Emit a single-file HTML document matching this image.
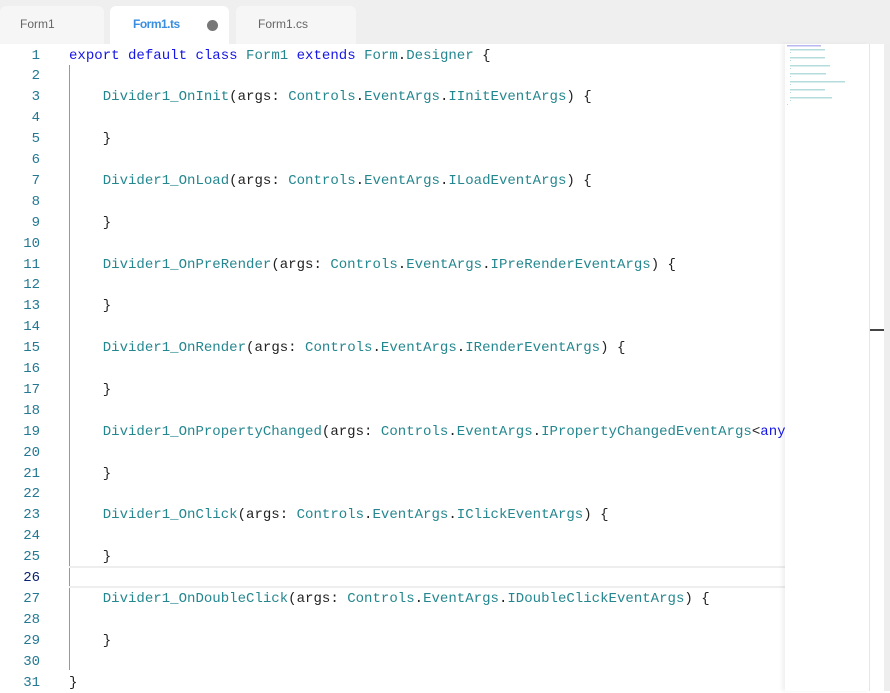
<!DOCTYPE html>
<html><head><meta charset="utf-8"><style>
body{margin:0;width:890px;height:691px;overflow:hidden;background:#fff;position:relative;font-family:"Liberation Sans",sans-serif}
.bar{position:absolute;left:0;top:0;width:890px;height:44px;background:#efefef}
.tab{position:absolute;top:6px;height:38px;background:#f6f6f6;border-radius:6px 6px 0 0;font-size:12px;color:#666;line-height:36px}
.tab.act{background:#fff;color:#3a8ee0;font-weight:bold;letter-spacing:-0.5px}
.w{position:absolute;left:0;top:1.5px;width:890px;height:691px}
.ln{position:absolute;left:0;width:40px;text-align:right;font-family:"Liberation Mono",monospace;font-size:14px;color:#237893;height:20.9px;line-height:20.9px}
.cd{position:absolute;left:69px;white-space:pre;font-family:"Liberation Mono",monospace;font-size:14.05px;color:#222;height:20.9px;line-height:20.9px}
.k{color:#1515e6}.t{color:#24878f}
</style></head><body>
<div class="bar"></div>
<div class="tab" style="left:0;width:104px"><span style="margin-left:20px">Form1</span></div>
<div class="tab act" style="left:110px;width:119px"><span style="margin-left:23px">Form1.ts</span><span style="position:absolute;left:97px;top:14px;width:11px;height:11px;border-radius:50%;background:#777"></span></div>
<div class="tab" style="left:236px;width:120px"><span style="margin-left:22px">Form1.cs</span></div>
<div style="position:absolute;left:69px;top:65px;width:1px;height:605px;background:#999"></div>
<div style="position:absolute;left:69px;top:566px;width:716px;height:18px;border-top:2px solid #eee;border-bottom:2px solid #eee"></div>
<div class="w">
<div class="ln" style="top:44px">1</div><div class="cd" style="top:44px"><span class="k">export default class</span> <span class="t">Form1</span> <span class="k">extends</span> <span class="t">Form</span>.<span class="t">Designer</span> {</div>
<div class="ln" style="top:64.9px">2</div>
<div class="ln" style="top:85.8px">3</div><div class="cd" style="top:85.8px">    <span class="t">Divider1_OnInit</span>(args: <span class="t">Controls</span>.<span class="t">EventArgs</span>.<span class="t">IInitEventArgs</span>) {</div>
<div class="ln" style="top:106.7px">4</div>
<div class="ln" style="top:127.6px">5</div><div class="cd" style="top:127.6px">    }</div>
<div class="ln" style="top:148.5px">6</div>
<div class="ln" style="top:169.4px">7</div><div class="cd" style="top:169.4px">    <span class="t">Divider1_OnLoad</span>(args: <span class="t">Controls</span>.<span class="t">EventArgs</span>.<span class="t">ILoadEventArgs</span>) {</div>
<div class="ln" style="top:190.3px">8</div>
<div class="ln" style="top:211.2px">9</div><div class="cd" style="top:211.2px">    }</div>
<div class="ln" style="top:232.1px">10</div>
<div class="ln" style="top:253px">11</div><div class="cd" style="top:253px">    <span class="t">Divider1_OnPreRender</span>(args: <span class="t">Controls</span>.<span class="t">EventArgs</span>.<span class="t">IPreRenderEventArgs</span>) {</div>
<div class="ln" style="top:273.9px">12</div>
<div class="ln" style="top:294.8px">13</div><div class="cd" style="top:294.8px">    }</div>
<div class="ln" style="top:315.7px">14</div>
<div class="ln" style="top:336.6px">15</div><div class="cd" style="top:336.6px">    <span class="t">Divider1_OnRender</span>(args: <span class="t">Controls</span>.<span class="t">EventArgs</span>.<span class="t">IRenderEventArgs</span>) {</div>
<div class="ln" style="top:357.5px">16</div>
<div class="ln" style="top:378.4px">17</div><div class="cd" style="top:378.4px">    }</div>
<div class="ln" style="top:399.3px">18</div>
<div class="ln" style="top:420.2px">19</div><div class="cd" style="top:420.2px;width:716px;overflow:hidden">    <span class="t">Divider1_OnPropertyChanged</span>(args: <span class="t">Controls</span>.<span class="t">EventArgs</span>.<span class="t">IPropertyChangedEventArgs</span>&lt;<span class="k">any</span>&gt;) {</div>
<div class="ln" style="top:441.1px">20</div>
<div class="ln" style="top:462px">21</div><div class="cd" style="top:462px">    }</div>
<div class="ln" style="top:482.9px">22</div>
<div class="ln" style="top:503.8px">23</div><div class="cd" style="top:503.8px">    <span class="t">Divider1_OnClick</span>(args: <span class="t">Controls</span>.<span class="t">EventArgs</span>.<span class="t">IClickEventArgs</span>) {</div>
<div class="ln" style="top:524.7px">24</div>
<div class="ln" style="top:545.6px">25</div><div class="cd" style="top:545.6px">    }</div>
<div class="ln" style="top:566.5px;color:#0b216f">26</div>
<div class="ln" style="top:587.4px">27</div><div class="cd" style="top:587.4px">    <span class="t">Divider1_OnDoubleClick</span>(args: <span class="t">Controls</span>.<span class="t">EventArgs</span>.<span class="t">IDoubleClickEventArgs</span>) {</div>
<div class="ln" style="top:608.3px">28</div>
<div class="ln" style="top:629.2px">29</div><div class="cd" style="top:629.2px">    }</div>
<div class="ln" style="top:650.1px">30</div>
<div class="ln" style="top:671px">31</div><div class="cd" style="top:671px">}</div>
</div>
<div style="position:absolute;left:785px;top:44px;width:84px;height:647px;background:#fff;box-shadow:-3px 0 4px rgba(0,0,0,0.06);border-right:1px solid #e6e6e6"></div>
<div style="position:absolute;left:870px;top:44px;width:14px;height:647px;background:#fff"></div>
<div style="position:absolute;left:884px;top:44px;width:6px;height:647px;background:#eee"></div>
<div style="position:absolute;left:870px;top:329px;width:14px;height:2px;background:#444"></div>
<svg style="position:absolute;left:786px;top:44px" width="82" height="70">
<g fill="#b5dcdc"><rect x="1" y="1" width="34" height="1.5" fill="#b8b8f0"/>
<rect x="4" y="5" width="35" height="1.5"/><rect x="4" y="13" width="35" height="1.5"/><rect x="4" y="21" width="40" height="1.5"/><rect x="4" y="29" width="36" height="1.5"/><rect x="4" y="37" width="55" height="1.5"/><rect x="4" y="45" width="35" height="1.5"/><rect x="4" y="53" width="42" height="1.5"/>
<rect x="4" y="8" width="1" height="1"/><rect x="4" y="16" width="1" height="1"/><rect x="4" y="24" width="1" height="1"/><rect x="4" y="32" width="1" height="1"/><rect x="4" y="40" width="1" height="1"/><rect x="4" y="48" width="1" height="1"/><rect x="4" y="56" width="1" height="1"/><rect x="1" y="60" width="1" height="1"/></g></svg>
</body></html>
